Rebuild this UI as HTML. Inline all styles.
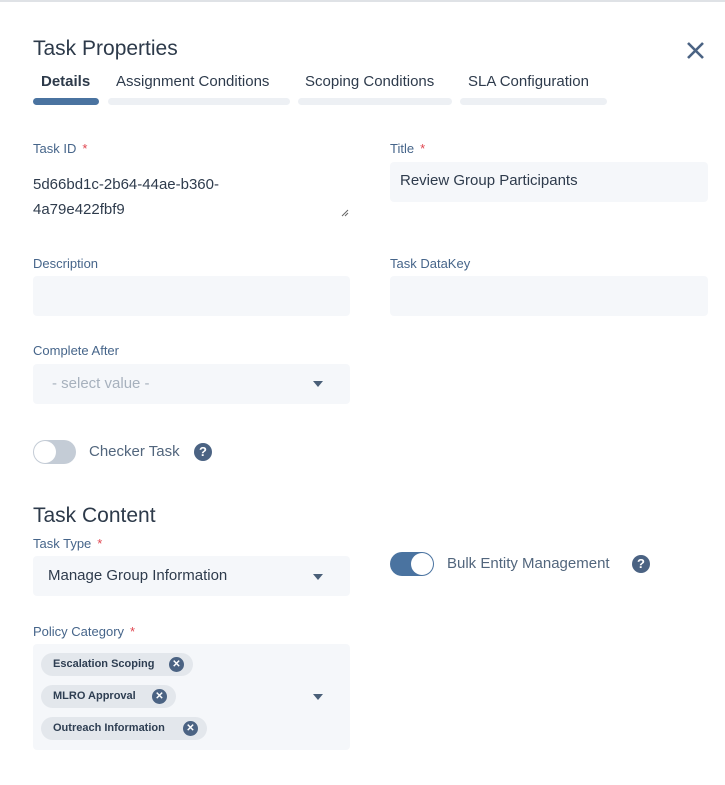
<!DOCTYPE html>
<html><head><style>
*{box-sizing:border-box;margin:0;padding:0}
body{width:725px;height:785px;background:#fff;font-family:"Liberation Sans",sans-serif;position:relative;overflow:hidden}
.a{position:absolute;white-space:nowrap}
.lbl{font-size:13px;color:#46658a}
.req{color:#e0454f;margin-left:6px}
.inp{position:absolute;background:#f5f7fa;border-radius:4px}
.tx{font-size:15px;color:#2e3b4c}
.bar{position:absolute;top:98px;height:7px;border-radius:4px;background:#edf0f4}
.caret{position:absolute;width:0;height:0;border-left:5px solid transparent;border-right:5px solid transparent;border-top:6px solid #4a5f78}
.help{position:absolute;width:18px;height:18px;border-radius:50%;background:#4b6383;color:#fff;font-weight:bold;font-size:13px;text-align:center;line-height:18px}
.chip{position:absolute;left:41px;height:23px;border-radius:12px;background:#e3e7ec;font-size:11px;font-weight:bold;color:#2e3e52;padding-left:12px;line-height:23px}
.cx{position:absolute;top:4px;width:15px;height:15px;border-radius:50%;background:#4b6383;color:#fff;font-size:10px;text-align:center;line-height:15px}
</style></head><body>
<div class="a" style="left:0;top:0;width:725px;height:2px;background:#dfe2e6"></div>
<div class="a" style="left:33px;top:37px;font-size:21px;color:#2d3a4a">Task Properties</div>
<svg class="a" style="left:686px;top:41px" width="19" height="19"><path d="M2 2L17 17M17 2L2 17" stroke="#4b6383" stroke-width="2.6"/></svg>
<div class="a" style="left:41px;top:73px;font-size:15px;font-weight:bold;color:#2d3a4a">Details</div>
<div class="a" style="left:116px;top:73px;font-size:15px;color:#2e3b4c">Assignment Conditions</div>
<div class="a" style="left:305px;top:73px;font-size:15px;color:#2e3b4c">Scoping Conditions</div>
<div class="a" style="left:468px;top:73px;font-size:15px;color:#2e3b4c">SLA Configuration</div>
<div class="bar" style="left:33px;width:66px;background:#4a73a0"></div>
<div class="bar" style="left:108px;width:182px"></div>
<div class="bar" style="left:298px;width:154px"></div>
<div class="bar" style="left:460px;width:147px"></div>

<div class="a lbl" style="left:33px;top:141px">Task ID<span class="req">*</span></div>
<div class="a lbl" style="left:390px;top:141px">Title<span class="req">*</span></div>
<div class="a tx" style="left:33px;top:172px;line-height:25px;white-space:normal;width:300px">5d66bd1c-2b64-44ae-b360-<br>4a79e422fbf9</div>
<svg class="a" style="left:341px;top:209px" width="8" height="8"><path d="M1 7L7 1M4 7L7 4" stroke="#666" stroke-width="1"/></svg>
<div class="inp" style="left:390px;top:162px;width:318px;height:40px"></div>
<div class="a tx" style="left:400px;top:172px">Review Group Participants</div>

<div class="a lbl" style="left:33px;top:256px">Description</div>
<div class="a lbl" style="left:390px;top:256px">Task DataKey</div>
<div class="inp" style="left:33px;top:276px;width:317px;height:40px"></div>
<div class="inp" style="left:390px;top:276px;width:318px;height:40px"></div>

<div class="a lbl" style="left:33px;top:343px">Complete After</div>
<div class="inp" style="left:33px;top:364px;width:317px;height:40px"></div>
<div class="a" style="left:52px;top:375px;font-size:15px;color:#a7b1bd">- select value -</div>
<div class="caret" style="left:313px;top:381px"></div>

<div class="a" style="left:33px;top:440px;width:43px;height:24px;border-radius:12px;background:#c4ccd6"></div>
<div class="a" style="left:34px;top:441px;width:22px;height:22px;border-radius:50%;background:#fff"></div>
<div class="a" style="left:89px;top:443px;font-size:15px;color:#52667d">Checker Task</div>
<div class="help" style="left:194px;top:443px">?</div>

<div class="a" style="left:33px;top:504px;font-size:21px;color:#2d3a4a">Task Content</div>
<div class="a lbl" style="left:33px;top:536px">Task Type<span class="req">*</span></div>
<div class="inp" style="left:33px;top:556px;width:317px;height:40px"></div>
<div class="a tx" style="left:48px;top:567px">Manage Group Information</div>
<div class="caret" style="left:313px;top:574px"></div>

<div class="a" style="left:390px;top:552px;width:44px;height:24px;border-radius:12px;background:#4a73a0"></div>
<div class="a" style="left:411px;top:553px;width:22px;height:22px;border-radius:50%;background:#fff"></div>
<div class="a" style="left:447px;top:555px;font-size:15px;color:#52667d">Bulk Entity Management</div>
<div class="help" style="left:632px;top:555px">?</div>

<div class="a lbl" style="left:33px;top:624px">Policy Category<span class="req">*</span></div>
<div class="inp" style="left:33px;top:644px;width:317px;height:106px"></div>
<div class="chip" style="top:653px;width:152px">Escalation Scoping<span class="cx" style="left:128px">✕</span></div>
<div class="chip" style="top:685px;width:135px">MLRO Approval<span class="cx" style="left:111px">✕</span></div>
<div class="chip" style="top:717px;width:166px">Outreach Information<span class="cx" style="left:142px">✕</span></div>
<div class="caret" style="left:313px;top:694px"></div>
</body></html>
